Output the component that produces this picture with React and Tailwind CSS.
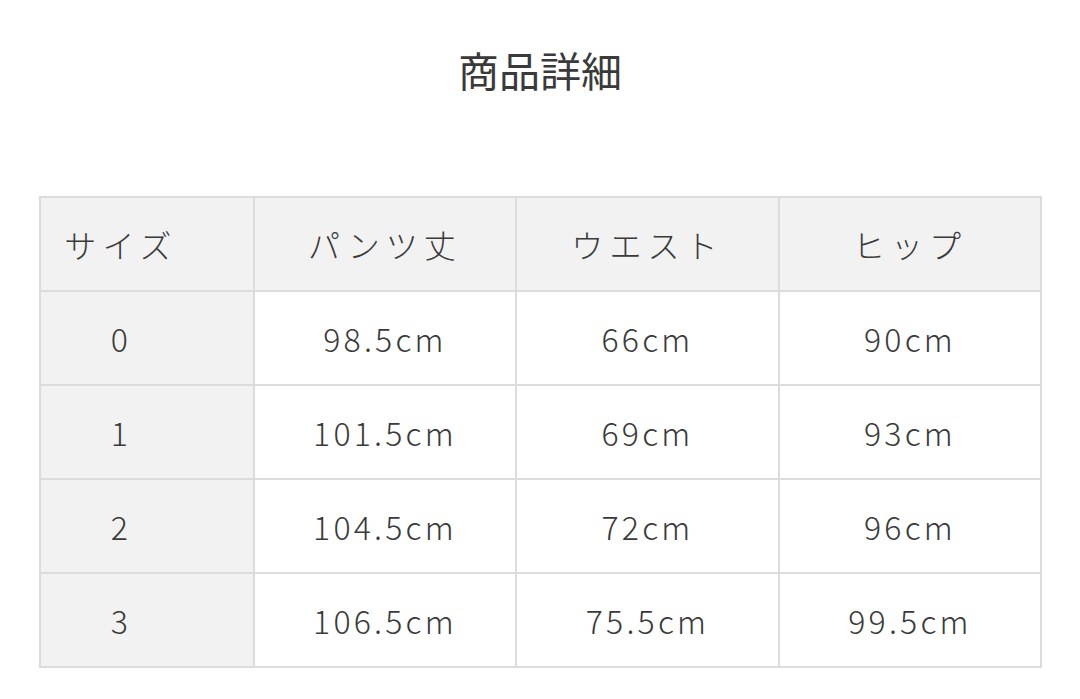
const FONT = '"Noto Sans CJK JP", "Noto Sans", sans-serif'

const rows = [
  ['0', '98.5cm', '66cm', '90cm'],
  ['1', '101.5cm', '69cm', '93cm'],
  ['2', '104.5cm', '72cm', '96cm'],
  ['3', '106.5cm', '75.5cm', '99.5cm'],
]

export default function App() {
  return (
    <div className="min-h-screen bg-white text-[#3a3a3a]" style={{ fontFamily: FONT }}>
      <h2 className="pt-[42px] text-center text-[41px] leading-[54px] font-normal">商品詳細</h2>

      <div className="px-[39px] pt-[100px]">
        <table className="w-[1001px] border-collapse table-fixed">
          <colgroup>
            <col className="w-[214px]" />
            <col className="w-[262px]" />
            <col className="w-[263px]" />
            <col className="w-[262px]" />
          </colgroup>
          <thead>
            <tr className="h-[94px] bg-[#f2f2f2]">
              <th className="border-2 border-[#dcdcdc] pr-[52px] text-center text-[32px] font-light tracking-[0.19em]">サイズ</th>
              <th className="border-2 border-[#dcdcdc] text-center text-[32px] font-light tracking-[0.19em]">パンツ丈</th>
              <th className="border-2 border-[#dcdcdc] text-center text-[32px] font-light tracking-[0.19em]">ウエスト</th>
              <th className="border-2 border-[#dcdcdc] text-center text-[32px] font-light tracking-[0.19em]">ヒップ</th>
            </tr>
          </thead>
          <tbody>
            {rows.map(r => (
              <tr key={r[0]} className="h-[94px]">
                <td className="border-2 border-[#dcdcdc] bg-[#f2f2f2] pr-[52px] text-center text-[32px] font-light tracking-[0.1em]">{r[0]}</td>
                {r.slice(1).map((v, i) => (
                  <td key={i} className="border-2 border-[#dcdcdc] text-center text-[32px] font-light tracking-[0.1em]">{v}</td>
                ))}
              </tr>
            ))}
          </tbody>
        </table>
      </div>
    </div>
  )
}
